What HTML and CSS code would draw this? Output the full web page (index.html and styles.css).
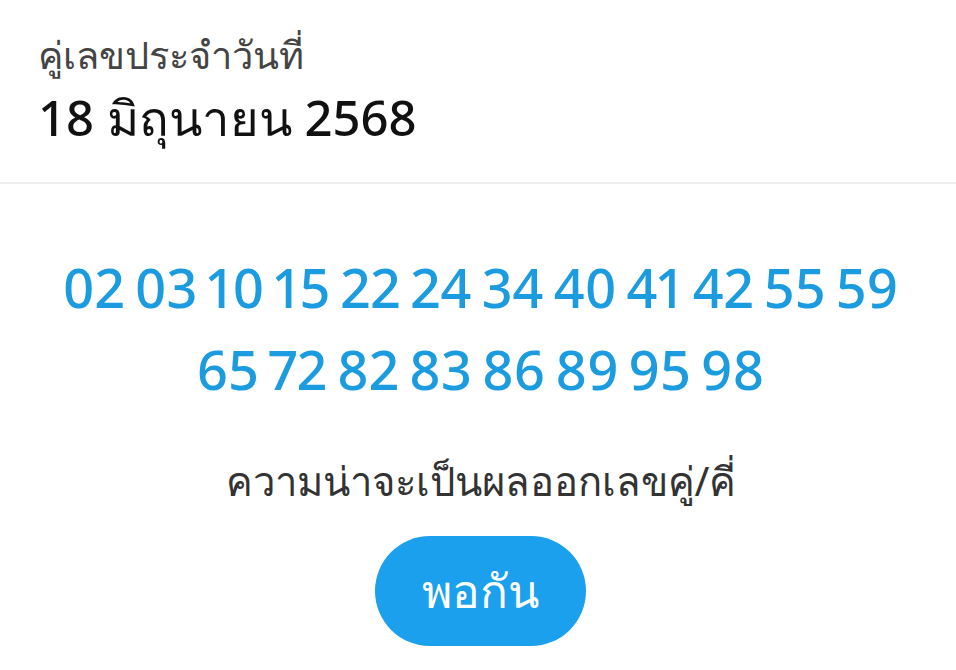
FILE: index.html
```html
<!DOCTYPE html>
<html lang="th">
<head>
<meta charset="utf-8">
<link rel="stylesheet" href="styles.css">
</head>
<body>
<div class="page">
  <header class="head">
    <div class="label">คู่เลขประจำวันที่</div>
    <div class="date">18 มิถุนายน 2568</div>
  </header>
  <main class="body">
    <div class="numbers">
      <div class="row">02 03 10 15 22 24 34 40 41 42 55 59</div>
      <div class="row">65 72 82 83 86 89 95 98</div>
    </div>
    <div class="question">ความน่าจะเป็นผลออกเลขคู่/คี่</div>
    <div class="pill">พอกัน</div>
  </main>
</div>
</body>
</html>
```
FILE: styles.css
```css
html, body {
  margin: 0;
  padding: 0;
  background: #fff;
}
.page {
  width: 956px;
  height: 670px;
  overflow: hidden;
  font-family: "Noto Sans", "DejaVu Sans", sans-serif;
}
.head {
  padding: 28px 38px 0;
  border-bottom: 2px solid #eeeeee;
  box-sizing: border-box;
  height: 184px;
}
.label {
  font-size: 38px;
  color: #444;
  line-height: 52px;
}
.date {
  font-size: 49px;
  font-weight: 500;
  color: #111;
  line-height: 64px;
  margin-top: 5px;
}
.body {
  display: flex;
  flex-direction: column;
  align-items: center;
}
.numbers {
  margin-top: 62px;
  margin-left: 5px;
  text-align: center;
  color: #1b9be0;
  font-size: 54px;
  line-height: 82px;
  font-weight: 500;
  font-variant-numeric: proportional-nums;
  word-spacing: -4px;
}
.question {
  margin-top: 40px;
  margin-left: 6px;
  font-size: 40px;
  color: #333;
}
.pill {
  margin-top: 22px;
  margin-left: 5px;
  width: 211px;
  height: 110px;
  border-radius: 55px;
  background: #1aa0ec;
  color: #fff;
  font-size: 46px;
  font-weight: 500;
  display: flex;
  align-items: center;
  justify-content: center;
}
```
